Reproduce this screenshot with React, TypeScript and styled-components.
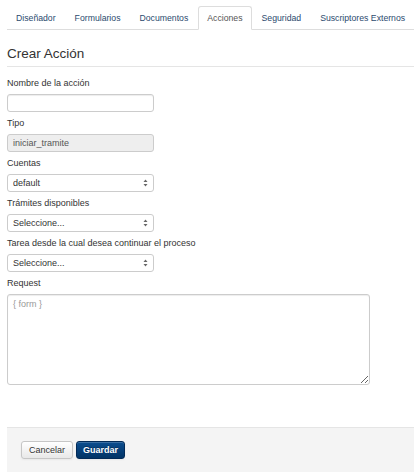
import React from "react";
import styled, { createGlobalStyle } from "styled-components";

const GlobalStyle = createGlobalStyle`
  html, body {
    margin: 0;
    padding: 0;
    background: #ffffff;
  }
  body {
    font-family: "Liberation Sans", Arial, Helvetica, sans-serif;
    font-size: 9px;
    color: #333333;
  }
  * { box-sizing: border-box; }
`;

const Page = styled.div`
  padding: 6px 0 0 7px;
  min-height: 472px;
  display: flex;
  flex-direction: column;
`;

const TabList = styled.ul`
  display: flex;
  list-style: none;
  margin: 0 0 10px;
  padding: 0;
  border-bottom: 1px solid #dddddd;
`;

const TabItem = styled.li`
  margin: 0 1px -1px 0;
`;

const TabLink = styled.a<{ $active?: boolean }>`
  display: block;
  padding: 0 8px;
  line-height: 22px;
  font-size: 8.7px;
  text-decoration: none;
  white-space: nowrap;
  cursor: pointer;
  border: 1px solid ${(p) => (p.$active ? "#dddddd" : "transparent")};
  border-bottom-color: ${(p) => (p.$active ? "#ffffff" : "transparent")};
  border-radius: 3px 3px 0 0;
  background: ${(p) => (p.$active ? "#ffffff" : "transparent")};
  color: ${(p) => (p.$active ? "#555555" : "#2b4a6e")};
`;

const Legend = styled.h3`
  margin: 0 0 10px;
  padding-top: 2px;
  font-size: 13.5px;
  font-weight: normal;
  line-height: 24px;
  color: #333333;
  border-bottom: 1px solid #e5e5e5;
`;

const Form = styled.form`
  display: flex;
  flex-direction: column;
  flex: 1;
`;

const Field = styled.div`
  display: flex;
  flex-direction: column;
  align-items: flex-start;
  margin-bottom: 5px;
`;

const Label = styled.label`
  display: block;
  line-height: 13px;
  margin-bottom: 4px;
  color: #333333;
`;

const TextInput = styled.input`
  width: 147px;
  height: 18px;
  padding: 0 5px;
  font-family: inherit;
  font-size: 9px;
  color: #555555;
  background: #ffffff;
  border: 1px solid #cccccc;
  border-radius: 3px;
  box-shadow: inset 0 1px 1px rgba(0, 0, 0, 0.075);
  outline: none;

  &:disabled {
    background: #eeeeee;
    color: #555555;
    box-shadow: none;
  }
`;

const SelectWrap = styled.div`
  position: relative;
  width: 147px;
`;

const Select = styled.select`
  display: block;
  width: 100%;
  height: 18px;
  padding: 0 14px 0 5px;
  font-family: inherit;
  font-size: 9px;
  color: #333333;
  background: #ffffff;
  border: 1px solid #cccccc;
  border-radius: 3px;
  appearance: none;
  -webkit-appearance: none;
  outline: none;
`;

const Arrows = styled.svg`
  position: absolute;
  right: 6px;
  top: 5px;
  width: 5px;
  height: 8px;
  pointer-events: none;
`;

const TextArea = styled.textarea`
  width: 363px;
  height: 91px;
  padding: 4px 5px;
  font-family: inherit;
  font-size: 9px;
  color: #555555;
  border: 1px solid #cccccc;
  border-radius: 3px;
  box-shadow: inset 0 1px 1px rgba(0, 0, 0, 0.075);
  outline: none;
  resize: both;

  &::placeholder {
    color: #999999;
  }
`;

const Actions = styled.div`
  margin-top: 37px;
  flex: 1;
  display: flex;
  align-items: flex-start;
  gap: 3px;
  padding: 13px 14px;
  background: #f4f4f4;
  border-top: 1px solid #e5e5e5;
`;

const Button = styled.button<{ $primary?: boolean }>`
  height: 18px;
  padding: 0 ${(p) => (p.$primary ? "6px" : "7px")};
  font-family: inherit;
  font-size: 9px;
  font-weight: ${(p) => (p.$primary ? "bold" : "normal")};
  color: ${(p) => (p.$primary ? "#ffffff" : "#333333")};
  text-shadow: ${(p) => (p.$primary ? "0 -1px 0 rgba(0,0,0,0.3)" : "0 1px 1px rgba(255,255,255,0.75)")};
  border: 1px solid ${(p) => (p.$primary ? "#022a57" : "#c6c6c6")};
  border-radius: 3px;
  background: ${(p) =>
    p.$primary
      ? "linear-gradient(to bottom, #0b4d8f, #023466)"
      : "linear-gradient(to bottom, #ffffff, #e8e8e8)"};
  box-shadow: inset 0 1px 0 rgba(255, 255, 255, 0.2), 0 1px 2px rgba(0, 0, 0, 0.05);
  cursor: pointer;
`;

const SelectArrows = () => (
  <Arrows viewBox="0 0 5 8">
    <path d="M2.5 0.5 L4.5 3 L0.5 3 Z" fill="#666666" />
    <path d="M2.5 7.5 L4.5 5 L0.5 5 Z" fill="#666666" />
  </Arrows>
);

const tabs = [
  "Diseñador",
  "Formularios",
  "Documentos",
  "Acciones",
  "Seguridad",
  "Suscriptores Externos",
];

const SelectField = ({ label, value }: { label: string; value: string }) => (
  <Field>
    <Label>{label}</Label>
    <SelectWrap>
      <Select defaultValue={value}>
        <option value={value}>{value}</option>
      </Select>
      <SelectArrows />
    </SelectWrap>
  </Field>
);

export default function App() {
  return (
    <>
      <GlobalStyle />
      <Page>
        <TabList>
          {tabs.map((t) => (
            <TabItem key={t}>
              <TabLink $active={t === "Acciones"}>{t}</TabLink>
            </TabItem>
          ))}
        </TabList>
        <Legend>Crear Acción</Legend>
        <Form onSubmit={(e) => e.preventDefault()}>
          <Field>
            <Label>Nombre de la acción</Label>
            <TextInput type="text" />
          </Field>
          <Field>
            <Label>Tipo</Label>
            <TextInput type="text" value="iniciar_tramite" disabled readOnly />
          </Field>
          <SelectField label="Cuentas" value="default" />
          <SelectField label="Trámites disponibles" value="Seleccione..." />
          <SelectField
            label="Tarea desde la cual desea continuar el proceso"
            value="Seleccione..."
          />
          <Field>
            <Label>Request</Label>
            <TextArea placeholder="{ form }" />
          </Field>
          <Actions>
            <Button type="button">Cancelar</Button>
            <Button type="submit" $primary>
              Guardar
            </Button>
          </Actions>
        </Form>
      </Page>
    </>
  );
}
